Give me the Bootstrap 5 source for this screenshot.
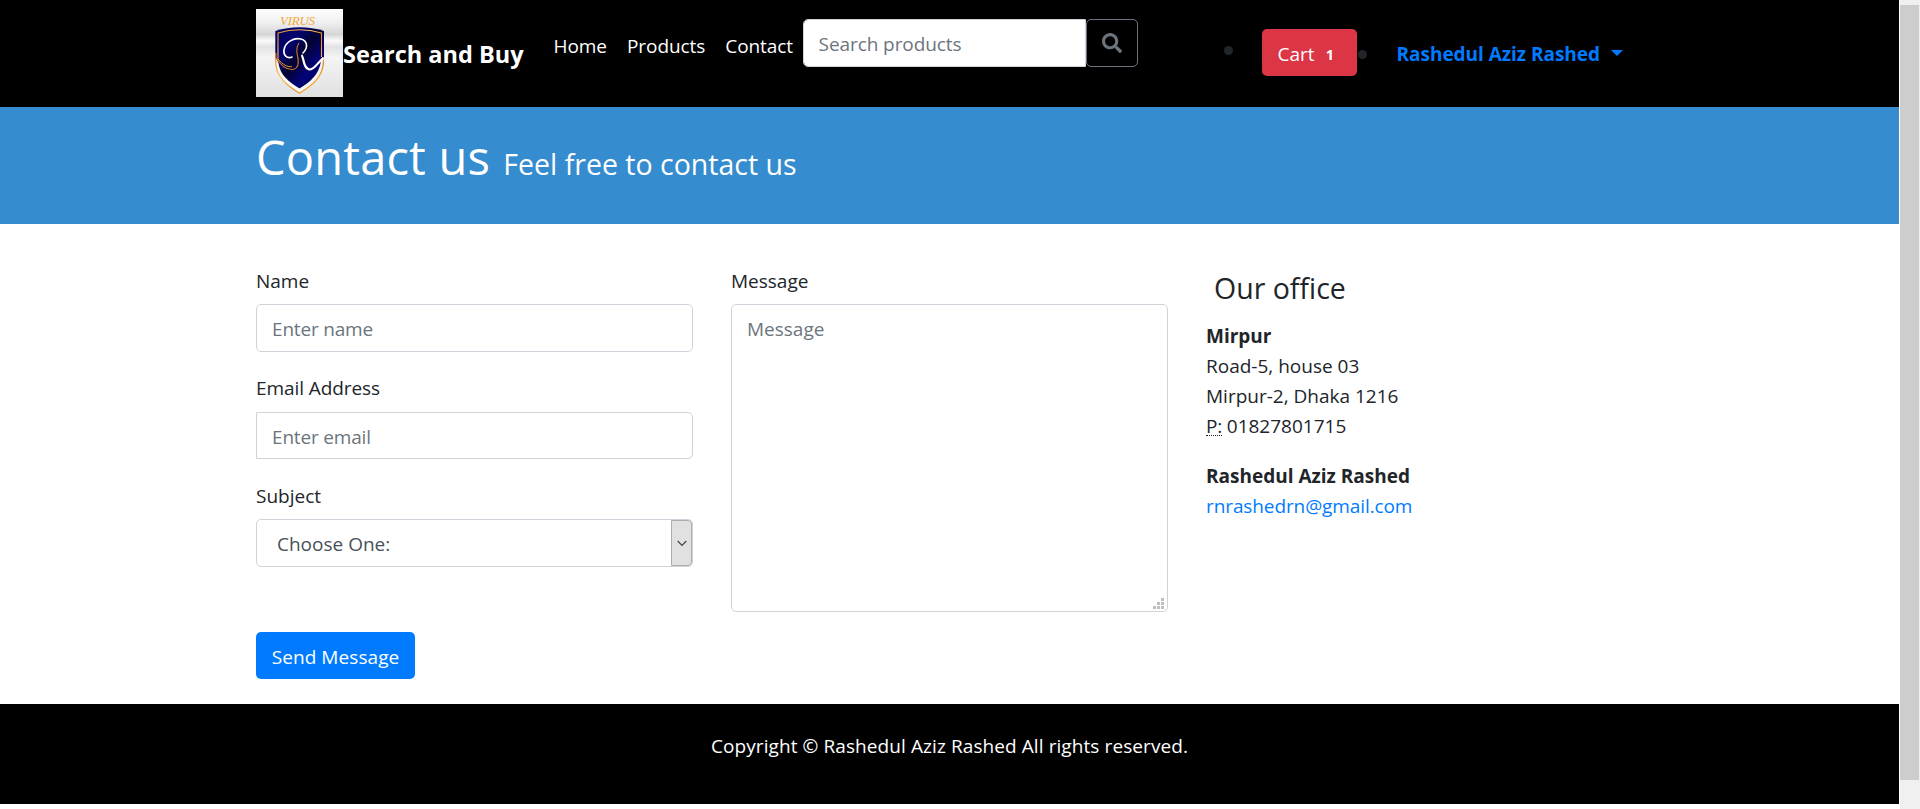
<!DOCTYPE html>
<html lang="en">
<head>
<meta charset="utf-8">
<meta name="viewport" content="width=device-width, initial-scale=1">
<title>Contact us - Search and Buy</title>
<link href="https://cdn.jsdelivr.net/npm/bootstrap@5.3.0/dist/css/bootstrap.min.css" rel="stylesheet">
<style>
  html { font-size: 20px; overflow: hidden; }
  body { font-family: "Open Sans", "Noto Sans", sans-serif; font-size: 19px; line-height: 30px; color: #212529; height: 809px; overflow: hidden; }
  .page-view { width: 1899px; margin-right: 1px; }
  .shop-container { width: 1425px; max-width: none; padding: 0 19px; }
  .topbar { height: 107px; background: #000; }
  .topbar .navbar-brand { height: 88px; padding: 0; margin: 9px 30px 0 0; font-size: 23.5px; color: #fff; }
  .brand-name { padding-top: 2px; }
  .brand-logo { width: 87px; height: 88px; }
  .main-links { gap: 20px; margin-top: 31px; width: 239px; }
  .main-links .nav-link { color: #fff; padding: 0; font-size: 19px; line-height: 30px; letter-spacing: -.07px; }
  .form-control { height: 48px; padding: 8px 15px 6px; font-size: 19px; line-height: 32px; border-color: #ced4da; border-radius: 5px; color: #495057; }
  .form-control::placeholder { color: #6c757d; opacity: 1; }
  .field-col input { letter-spacing: -.18px; }
  .search-box { width: 335px; margin: 19px 0 0 10px; }
  .search-box .form-control { width: 283px; flex: none; border-radius: 5px 0 0 5px; letter-spacing: -.08px; }
  .search-btn { width: 52px; height: 48px; padding: 0; border: 1px solid #6c757d; border-radius: 5px; color: #6c757d; }
  .item-dot { width: 9px; height: 9px; border-radius: 50%; background: #212529; }
  .dot-first { margin: 46px 0 0 86px; }
  .dot-second { margin: 50px 0 0 1px; }
  .cart-btn { width: 95px; height: 47px; margin: 29px 0 0 29px; padding: 3px 0 0 16px; border: 0; border-radius: 5px; background: #dc3545; color: #fff; font-size: 19px; text-align: left; line-height: 45px; }
  .cart-count { font-size: 14.5px; padding: 0 0 0 11px; line-height: 1; background: none; }
  .user-link { color: #007bff; margin: 39px 0 0 30px; text-decoration: none; line-height: 30px; letter-spacing: -.03px; }
  .user-link::after { content: ""; display: inline-block; margin-left: 11px; vertical-align: 5px; border-top: 6px solid; border-left: 6px solid transparent; border-right: 6px solid transparent; }
  .banner { height: 117px; background: #358ccf; color: #fff; padding-top: 20px; }
  .banner h1 { font-size: 47px; line-height: 60px; font-weight: 400; margin: 0; letter-spacing: .17px; }
  .banner small { font-size: 28.5px; letter-spacing: 0; margin-left: 1px; }
  .contact-main { height: 480px; padding-top: 42px; }
  .field-col { width: 437px; margin-right: 38px; }
  .field-label { height: 30px; margin-bottom: 8px; display: block; }
  .email-label { margin: 21px 0 9px; letter-spacing: -.08px; }
  .subject-label { margin-top: 22px; }
  .email-input { height: 47px; border-radius: 0 5px 5px 0; }
  .subject-box { height: 48px; border: 1px solid #ced4da; border-radius: 5px; color: #495057; background: #fff; }
  .subject-box span { padding: 1px 0 0 20px; line-height: 46px; }
  .subject-arrow { width: 21px; background: #e1e1e1; border: 1px solid #adadad; border-radius: 0 4px 4px 0; }
  .message-box { height: 308px !important; resize: none; overflow: hidden; }
  .resize-grip { right: 4px; bottom: 3px; width: 11px; height: 11px; }
  .send-btn { width: 159px; height: 47px; margin-top: 20px; padding: 3px 0 0; border: 0; border-radius: 5px; background: #007bff; font-size: 19px; letter-spacing: .08px; }
  .office h2 { font-size: 28.5px; line-height: 36px; font-weight: 400; margin: 4px 0 15px 8px; }
  .office a { color: #007bff; text-decoration: none; letter-spacing: -.1px; }
  .office abbr { display: inline-block; height: 25px; line-height: 30px; cursor: help; text-decoration: none; border-bottom: 1px dotted #212529; letter-spacing: -.3px; }
  .office address + address { margin-top: 20px; }
  .footer-bar { height: 100px; background: #000; color: #fff; padding-top: 27px; letter-spacing: .085px; }
  .scroll-track { width: 20px; height: 809px; background: #f0f0f0; padding: 5px 1px 0 0; }
  .scroll-thumb { height: 775px; background: #cdcdcd; }
</style>
</head>
<body class="d-flex bg-white">
<div class="page-view flex-shrink-0">
  <nav class="topbar">
    <div class="container shop-container d-flex align-items-start">
      <a class="navbar-brand d-flex align-items-center fw-bold" href="#">
        <svg class="brand-logo" viewBox="0 0 87 88" aria-hidden="true">
          <defs>
            <linearGradient id="metal" x2="0" y2="1">
              <stop offset="0" stop-color="#fff"/><stop offset=".15" stop-color="#f0f0f0"/><stop offset=".29" stop-color="#d6d6d6"/>
              <stop offset=".36" stop-color="#fafafa"/><stop offset=".43" stop-color="#e2e2e2"/><stop offset=".55" stop-color="#f4f4f4"/><stop offset="1" stop-color="#e0e0e0"/>
            </linearGradient>
            <linearGradient id="navy" x2="1" y2="1">
              <stop offset="0" stop-color="#00005c"/><stop offset=".3" stop-color="#05056e"/><stop offset=".48" stop-color="#020230"/><stop offset=".7" stop-color="#03037a"/><stop offset="1" stop-color="#01013c"/>
            </linearGradient>
            <linearGradient id="gold" x2="1" y2="1">
              <stop offset="0" stop-color="#e98a1c"/><stop offset=".35" stop-color="#f9c65a"/><stop offset=".65" stop-color="#e8861c"/><stop offset="1" stop-color="#ffd23c"/>
            </linearGradient>
          </defs>
          <rect width="87" height="88" fill="url(#metal)"/>
          <text x="24" y="16" font-family="Liberation Serif, serif" font-style="italic" font-weight="400" font-size="13" textLength="35" fill="#f3a93a">VIRUS</text>
          <path d="M19.300 22Q43.500 14.500 68 22V50C67 64 58 71 43.500 80C29 71 20 64 19.300 50Z" fill="url(#navy)"/>
          <path d="M19.600 48V54C21 68 30 76 43.500 84C57 76 66 68 67.500 54V48L65 52C63 66 54 73 43.500 79.500C33 73 24 66 22.500 54Z" fill="#f4f4f4"/>
          <path d="M22 52V24Q43.500 17.500 65.500 24V48" fill="none" stroke="url(#gold)" stroke-width="1.100"/>
          <path d="M19.800 44V55C21 68 30 76 43.500 84.300C57 76 66 68 67.300 55V48" fill="none" stroke="url(#gold)" stroke-width="1.200"/>
          <path d="M20.500 49C25 57 31 61 37 60.500C43 59 43 53 41.500 47C40 41 41 37 43 34" fill="none" stroke="#c87728" stroke-width="1.100"/>
          <path d="M22 50C27 56 32 58.500 36 57.500" fill="none" stroke="#eaa13c" stroke-width="1"/>
          <path d="M36 48C31 50 27 46 28 41C29 33 38 28.500 45 30C52 32 52 39 47 44" fill="none" stroke="#fff" stroke-width="1.600" stroke-linecap="round"/>
          <path d="M45.500 46C48 48 47 60.500 54 60.500C59 60 62 53 67.500 49" fill="none" stroke="#fff" stroke-width="2.200"/>
        </svg>
        <span class="brand-name">Search and Buy</span>
      </a>
      <div class="main-links d-flex">
        <a class="nav-link" href="#">Home</a>
        <a class="nav-link" href="#">Products</a>
        <a class="nav-link" href="#">Contact</a>
      </div>
      <form class="search-box d-flex">
        <input class="form-control" type="text" placeholder="Search products" aria-label="Search products">
        <button class="btn search-btn d-flex align-items-center justify-content-center" type="button" aria-label="Search">
          <svg width="20" height="20" viewBox="0 0 512 512" fill="currentColor"><path d="M505 442.700 405.300 343c-4.500-4.500-10.600-7-17-7H372c27.600-35.300 44-79.700 44-128C416 93.100 322.900 0 208 0S0 93.100 0 208s93.100 208 208 208c48.300 0 92.700-16.400 128-44v16.300c0 6.400 2.500 12.500 7 17l99.700 99.700c9.400 9.400 24.600 9.400 33.900 0l28.300-28.300c9.400-9.400 9.400-24.600.1-34zM208 336c-70.700 0-128-57.200-128-128 0-70.700 57.200-128 128-128 70.700 0 128 57.200 128 128 0 70.700-57.200 128-128 128z"/></svg>
        </button>
      </form>
      <span class="item-dot dot-first"></span>
      <a class="btn cart-btn" href="#">Cart<span class="badge cart-count">1</span></a>
      <span class="item-dot dot-second"></span>
      <a class="user-link fw-bold" href="#">Rashedul Aziz Rashed</a>
    </div>
  </nav>

  <header class="banner">
    <div class="container shop-container">
      <h1>Contact us <small>Feel free to contact us</small></h1>
    </div>
  </header>

  <main class="contact-main">
    <div class="container shop-container d-flex align-items-start">
      <div class="field-col">
        <label class="field-label" for="name">Name</label>
        <input class="form-control" id="name" type="text" placeholder="Enter name">
        <label class="field-label email-label" for="email">Email Address</label>
        <input class="form-control email-input" id="email" type="email" placeholder="Enter email">
        <label class="field-label subject-label">Subject</label>
        <div class="subject-box d-flex justify-content-between">
          <span>Choose One:</span>
          <div class="subject-arrow d-flex align-items-center justify-content-center">
            <svg width="10" height="7" viewBox="0 0 10 7" fill="none" stroke="#444" stroke-width="1.200"><path d="M.7 1 5 5.300 9.300 1"/></svg>
          </div>
        </div>
      </div>
      <div class="field-col">
        <label class="field-label" for="message">Message</label>
        <div class="position-relative">
          <textarea class="form-control message-box d-block" id="message" placeholder="Message"></textarea>
          <svg class="resize-grip position-absolute" viewBox="0 0 11 11" fill="#bfbfbf"><path d="M8 0h3v3H8zM4 4h3v3H4zM8 4h3v3H8zM0 8h3v3H0zM4 8h3v3H4zM8 8h3v3H8z"/></svg>
        </div>
      </div>
      <div class="office">
        <h2>Our office</h2>
        <address class="mb-0">
          <strong>Mirpur</strong><br>
          Road-5, house 03<br>
          Mirpur-2, Dhaka 1216<br>
          <abbr title="Phone">P:</abbr> 01827801715
        </address>
        <address class="mb-0">
          <strong>Rashedul Aziz Rashed</strong><br>
          <a href="#">rnrashedrn@gmail.com</a>
        </address>
      </div>
    </div>
    <div class="container shop-container">
      <button class="btn btn-primary send-btn" type="button">Send Message</button>
    </div>
  </main>

  <footer class="footer-bar text-center">Copyright © Rashedul Aziz Rashed All rights reserved.</footer>
</div>
<div class="scroll-track flex-shrink-0"><div class="scroll-thumb"></div></div>
<script src="https://cdn.jsdelivr.net/npm/bootstrap@5.3.0/dist/js/bootstrap.bundle.min.js"></script>
</body>
</html>
